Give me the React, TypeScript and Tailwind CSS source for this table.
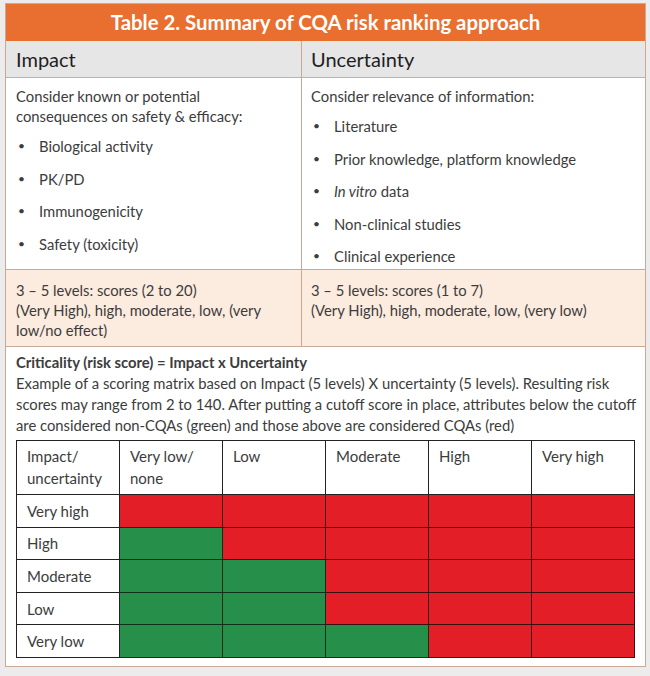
import React from "react";

const font = { fontFamily: "Lato, 'Liberation Sans', sans-serif" };

const impactItems = ["Biological activity", "PK/PD", "Immunogenicity", "Safety (toxicity)"];

const uncertaintyItems: React.ReactNode[] = [
  "Literature",
  "Prior knowledge, platform knowledge",
  <>
    <i>In vitro</i> data
  </>,
  "Non-clinical studies",
  "Clinical experience",
];

const levels = ["Very low/\nnone", "Low", "Moderate", "High", "Very high"];

// r = red (CQA), g = green (non-CQA)
const matrix: { label: string; cells: string }[] = [
  { label: "Very high", cells: "rrrrr" },
  { label: "High", cells: "grrrr" },
  { label: "Moderate", cells: "ggrrr" },
  { label: "Low", cells: "ggrrr" },
  { label: "Very low", cells: "gggrr" },
];

function Bullets({ items }: { items: React.ReactNode[] }) {
  return (
    <ul className="flex flex-col gap-[12.5px]">
      {items.map((item, i) => (
        <li key={i} className="flex items-center leading-[20px]">
          <span className="w-[23px] shrink-0 pl-[2px] text-[12px]">•</span>
          <span>{item}</span>
        </li>
      ))}
    </ul>
  );
}

export default function App() {
  return (
    <div className="h-[676px] w-[650px] bg-[#ececec] pl-[5px] pt-[3px]" style={font}>
      <div className="w-[641px] border border-[#c9a896] bg-white text-[14.8px] text-[#3c3c3c]">
        {/* Title bar */}
        <div className="flex h-[37px] items-center justify-center bg-[#e86f30] text-[20.4px] font-bold text-white">
          Table 2. Summary of CQA risk ranking approach
        </div>

        {/* Column headers */}
        <div className="grid grid-cols-[296px_1fr] border-b border-[#e3a77f] bg-[#e6e6e6] text-[20px] text-[#1f1f1f]">
          <div className="flex h-[36px] items-center border-r border-[#c9a896] pl-[10px]">Impact</div>
          <div className="flex h-[36px] items-center pl-[9px]">Uncertainty</div>
        </div>

        {/* Body */}
        <div className="grid h-[192px] grid-cols-[296px_1fr] border-b border-[#c9a896]">
          <div className="border-r border-[#c9a896] pl-[10px] pt-[8px]">
            <p className="mb-[10px] leading-[20px]">
              Consider known or potential
              <br />
              consequences on safety &amp; efficacy:
            </p>
            <Bullets items={impactItems} />
          </div>
          <div className="pl-[9px] pt-[8px]">
            <p className="mb-[10px] leading-[20px]">Consider relevance of information:</p>
            <Bullets items={uncertaintyItems} />
          </div>
        </div>

        {/* Levels */}
        <div className="grid h-[77px] grid-cols-[296px_1fr] border-b border-[#c9a896] bg-[#fcebdf] leading-[20px]">
          <div className="border-r border-[#c9a896] pl-[10px] pt-[10px]">
            3 – 5 levels: scores (2 to 20)
            <br />
            (Very High), high, moderate, low, (very
            <br />
            low/no effect)
          </div>
          <div className="pl-[9px] pt-[10px]">
            3 – 5 levels: scores (1 to 7)
            <br />
            (Very High), high, moderate, low, (very low)
          </div>
        </div>

        {/* Criticality */}
        <div className="px-[10px] pb-[8px] pt-[5px]">
          <p className="font-bold leading-[21px]">Criticality (risk score) = Impact x Uncertainty</p>
          <p className="whitespace-nowrap leading-[21px]">
            Example of a scoring matrix based on Impact (5 levels) X uncertainty (5 levels). Resulting risk
            <br />
            scores may range from 2 to 140. After putting a cutoff score in place, attributes below the cutoff
            <br />
            are considered non-CQAs (green) and those above are considered CQAs (red)
          </p>

          <table className="mt-[4px] w-[619px] table-fixed border-collapse border border-[#222] text-[15px]">
            <thead>
              <tr className="h-[54px]">
                <th className="border border-[#222] px-[10px] pt-[4px] text-left align-top font-normal leading-[22px]">
                  Impact/
                  <br />
                  uncertainty
                </th>
                {levels.map((l) => (
                  <th
                    key={l}
                    className="whitespace-pre-line border border-[#222] px-[10px] pt-[4px] text-left align-top font-normal leading-[22px]"
                  >
                    {l}
                  </th>
                ))}
              </tr>
            </thead>
            <tbody>
              {matrix.map((row) => (
                <tr key={row.label} className="h-[32.6px]">
                  <td className="border border-[#222] px-[10px] leading-[20px]">{row.label}</td>
                  {row.cells.split("").map((c, i) => (
                    <td
                      key={i}
                      className={
                        c === "r" ? "border border-[#3a1010] bg-[#e31e26]" : "border border-[#10301a] bg-[#26904a]"
                      }
                    />
                  ))}
                </tr>
              ))}
            </tbody>
          </table>
        </div>
      </div>
    </div>
  );
}
